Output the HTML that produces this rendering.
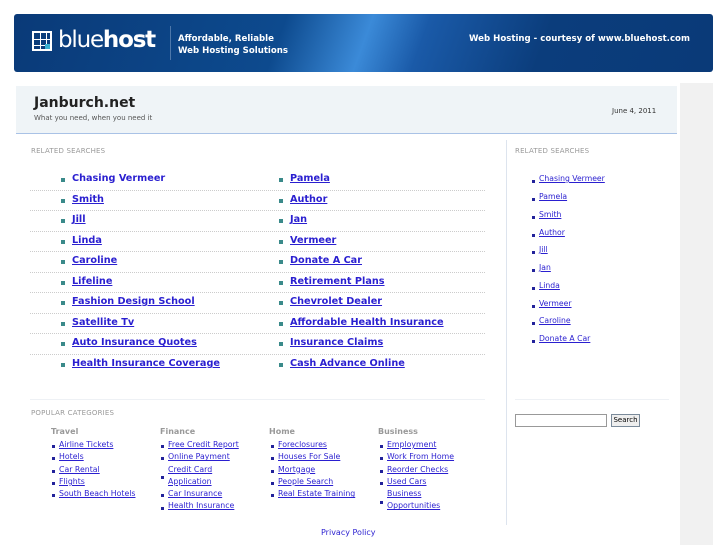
<!DOCTYPE html>
<html><head><meta charset="utf-8"><style>
*{margin:0;padding:0;box-sizing:border-box}
body{width:727px;height:545px;background:#fff;font-family:"DejaVu Sans","Liberation Sans",sans-serif;position:relative;overflow:hidden}
.a{position:absolute;white-space:nowrap}
a{color:#2a1fd0;text-decoration:underline}
.banner{left:14px;top:14px;width:699px;height:58px;border-radius:3px;background:linear-gradient(110deg,#0a3a78 0%,#0d4a8e 38%,#3b8ad8 50%,#1a5aa8 58%,#0b3d7c 75%,#0a3a78 100%)}
.strip{left:680px;top:83px;width:33px;height:462px;background:#f1f1f1}
.hdr{left:16px;top:86px;width:661px;height:48px;background:#eff4f7;border-bottom:1px solid #a9c2e6}
.lbl{font-size:7px;color:#999;letter-spacing:.2px}
.m{font-size:9.7px;font-weight:bold}
.bul{width:4px;height:4px;background:#3a8a8a;position:absolute}
.sep{position:absolute;left:30px;width:455px;border-top:1px dotted #ccc}
.s{font-size:7.7px}
.d{width:3px;height:3px;background:#22229a;position:absolute}
.c{font-size:7.8px}
.h{font-size:8px;font-weight:bold;color:#999}
</style></head><body>
<div class="a banner"></div>
<div class="a" style="left:32px;top:31px;width:20px;height:20px;border:2px solid #fff;background:linear-gradient(#fff,#fff) 6px 0/1px 100% no-repeat,linear-gradient(#fff,#fff) 12px 0/1px 100% no-repeat,linear-gradient(#fff,#fff) 0 6px/100% 1px no-repeat,linear-gradient(#fff,#fff) 0 12px/100% 1px no-repeat"></div>
<div class="a" style="left:45px;top:44px;width:5px;height:5px;background:#3ab0d0"></div>
<div class="a" style="left:58px;top:27px;font-size:23px;color:#fff;letter-spacing:-1.2px">blue<b>host</b></div>
<div class="a" style="left:170px;top:26px;width:1px;height:34px;background:#4d77aa"></div>
<div class="a" style="left:178px;top:33px;font-size:8.6px;font-weight:bold;color:#fff;line-height:12px">Affordable, Reliable<br>Web Hosting Solutions</div>
<div class="a" style="left:469px;top:34px;font-size:8.6px;font-weight:bold;color:#fff">Web Hosting - courtesy of www.bluehost.com</div>
<div class="a strip"></div>
<div class="a hdr"></div>
<div class="a" style="left:34px;top:95px;font-size:14px;font-weight:bold;color:#222">Janburch.net</div>
<div class="a" style="left:34px;top:114px;font-size:7px;color:#555">What you need, when you need it</div>
<div class="a" style="left:612px;top:107px;font-size:7px;color:#333">June 4, 2011</div>
<div class="a" style="left:506px;top:140px;width:1px;height:385px;background:#dde4ee"></div>
<div class="a lbl" style="left:31px;top:147px">RELATED SEARCHES</div>
<div class="a lbl" style="left:515px;top:147px">RELATED SEARCHES</div>

<div class="a m" style="left:72px;top:173px"><a style="text-decoration:none">Chasing Vermeer</a></div>
<div class="a m" style="left:72px;top:194px"><a>Smith</a></div>
<div class="a m" style="left:72px;top:214px"><a>Jill</a></div>
<div class="a m" style="left:72px;top:235px"><a>Linda</a></div>
<div class="a m" style="left:72px;top:255px"><a>Caroline</a></div>
<div class="a m" style="left:72px;top:276px"><a>Lifeline</a></div>
<div class="a m" style="left:72px;top:296px"><a>Fashion Design School</a></div>
<div class="a m" style="left:72px;top:317px"><a>Satellite Tv</a></div>
<div class="a m" style="left:72px;top:337px"><a>Auto Insurance Quotes</a></div>
<div class="a m" style="left:72px;top:358px"><a>Health Insurance Coverage</a></div>
<div class="a m" style="left:290px;top:173px"><a>Pamela</a></div>
<div class="a m" style="left:290px;top:194px"><a>Author</a></div>
<div class="a m" style="left:290px;top:214px"><a>Jan</a></div>
<div class="a m" style="left:290px;top:235px"><a>Vermeer</a></div>
<div class="a m" style="left:290px;top:255px"><a>Donate A Car</a></div>
<div class="a m" style="left:290px;top:276px"><a>Retirement Plans</a></div>
<div class="a m" style="left:290px;top:296px"><a>Chevrolet Dealer</a></div>
<div class="a m" style="left:290px;top:317px"><a>Affordable Health Insurance</a></div>
<div class="a m" style="left:290px;top:337px"><a>Insurance Claims</a></div>
<div class="a m" style="left:290px;top:358px"><a>Cash Advance Online</a></div>

<div class="bul" style="left:61px;top:178px"></div><div class="bul" style="left:279px;top:178px"></div>
<div class="bul" style="left:61px;top:199px"></div><div class="bul" style="left:279px;top:199px"></div>
<div class="bul" style="left:61px;top:219px"></div><div class="bul" style="left:279px;top:219px"></div>
<div class="bul" style="left:61px;top:240px"></div><div class="bul" style="left:279px;top:240px"></div>
<div class="bul" style="left:61px;top:260px"></div><div class="bul" style="left:279px;top:260px"></div>
<div class="bul" style="left:61px;top:281px"></div><div class="bul" style="left:279px;top:281px"></div>
<div class="bul" style="left:61px;top:301px"></div><div class="bul" style="left:279px;top:301px"></div>
<div class="bul" style="left:61px;top:322px"></div><div class="bul" style="left:279px;top:322px"></div>
<div class="bul" style="left:61px;top:342px"></div><div class="bul" style="left:279px;top:342px"></div>
<div class="bul" style="left:61px;top:363px"></div><div class="bul" style="left:279px;top:363px"></div>
<div class="sep" style="top:190px"></div><div class="sep" style="top:210px"></div><div class="sep" style="top:231px"></div>
<div class="sep" style="top:251px"></div><div class="sep" style="top:272px"></div><div class="sep" style="top:292px"></div>
<div class="sep" style="top:313px"></div><div class="sep" style="top:333px"></div><div class="sep" style="top:354px"></div>
<div class="a" style="left:30px;top:399px;width:455px;height:1px;background:#eef1f5"></div>
<div class="a" style="left:515px;top:399px;width:154px;height:1px;background:#eef1f5"></div>

<div class="a s" style="left:539px;top:174px"><a>Chasing Vermeer</a></div>
<div class="a s" style="left:539px;top:192px"><a>Pamela</a></div>
<div class="a s" style="left:539px;top:210px"><a>Smith</a></div>
<div class="a s" style="left:539px;top:228px"><a>Author</a></div>
<div class="a s" style="left:539px;top:245px"><a>Jill</a></div>
<div class="a s" style="left:539px;top:263px"><a>Jan</a></div>
<div class="a s" style="left:539px;top:281px"><a>Linda</a></div>
<div class="a s" style="left:539px;top:299px"><a>Vermeer</a></div>
<div class="a s" style="left:539px;top:316px"><a>Caroline</a></div>
<div class="a s" style="left:539px;top:334px"><a>Donate A Car</a></div>
<div class="d" style="left:532px;top:180px"></div><div class="d" style="left:532px;top:198px"></div>
<div class="d" style="left:532px;top:216px"></div><div class="d" style="left:532px;top:234px"></div>
<div class="d" style="left:532px;top:251px"></div><div class="d" style="left:532px;top:269px"></div>
<div class="d" style="left:532px;top:287px"></div><div class="d" style="left:532px;top:305px"></div>
<div class="d" style="left:532px;top:322px"></div><div class="d" style="left:532px;top:340px"></div>

<div class="a lbl" style="left:31px;top:409px">POPULAR CATEGORIES</div>
<div class="a" style="left:515px;top:414px;width:92px;height:13px;border:1px solid #999;background:#fff"></div>
<div class="a" style="left:611px;top:414px;width:29px;height:13px;border:1px solid #7a8a9a;background:#eee;font-size:7px;text-align:center;line-height:11px">Search</div>

<div class="a h" style="left:51px;top:427px">Travel</div>
<div class="a h" style="left:160px;top:427px">Finance</div>
<div class="a h" style="left:269px;top:427px">Home</div>
<div class="a h" style="left:378px;top:427px">Business</div>
<div class="a c" style="left:59px;top:439px;line-height:12.3px"><a>Airline Tickets</a><br><a>Hotels</a><br><a>Car Rental</a><br><a>Flights</a><br><a>South Beach Hotels</a></div>
<div class="a c" style="left:168px;top:439px;line-height:12.3px"><a>Free Credit Report</a><br><a>Online Payment</a><br><a>Credit Card</a><br><a>Application</a><br><a>Car Insurance</a><br><a>Health Insurance</a></div>
<div class="a c" style="left:278px;top:439px;line-height:12.3px"><a>Foreclosures</a><br><a>Houses For Sale</a><br><a>Mortgage</a><br><a>People Search</a><br><a>Real Estate Training</a></div>
<div class="a c" style="left:387px;top:439px;line-height:12.3px"><a>Employment</a><br><a>Work From Home</a><br><a>Reorder Checks</a><br><a>Used Cars</a><br><a>Business</a><br><a>Opportunities</a></div>
<div class="d" style="left:52px;top:445px"></div><div class="d" style="left:52px;top:457px"></div><div class="d" style="left:52px;top:470px"></div><div class="d" style="left:52px;top:482px"></div><div class="d" style="left:52px;top:494px"></div>
<div class="d" style="left:161px;top:445px"></div><div class="d" style="left:161px;top:457px"></div><div class="d" style="left:161px;top:476px"></div><div class="d" style="left:161px;top:494px"></div><div class="d" style="left:161px;top:507px"></div>
<div class="d" style="left:271px;top:445px"></div><div class="d" style="left:271px;top:457px"></div><div class="d" style="left:271px;top:470px"></div><div class="d" style="left:271px;top:482px"></div><div class="d" style="left:271px;top:494px"></div>
<div class="d" style="left:380px;top:445px"></div><div class="d" style="left:380px;top:457px"></div><div class="d" style="left:380px;top:470px"></div><div class="d" style="left:380px;top:482px"></div><div class="d" style="left:380px;top:501px"></div>
<div class="a" style="left:321px;top:528px;font-size:8px;color:#2a1fd0">Privacy Policy</div>
</body></html>
